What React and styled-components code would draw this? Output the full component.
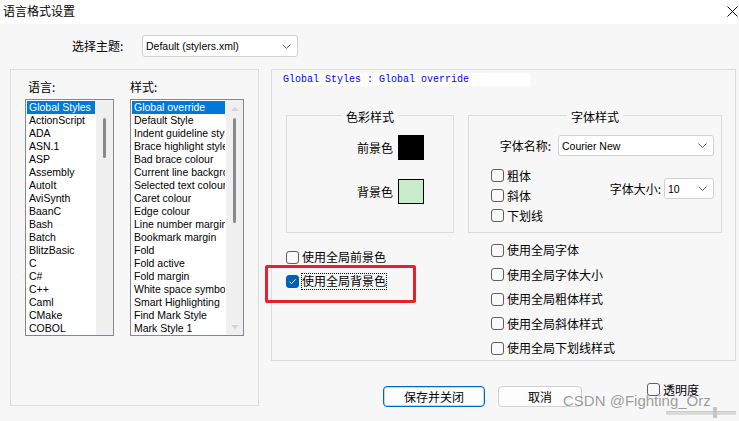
import React from 'react';
import styled, { createGlobalStyle } from 'styled-components';

const CJK = `"Noto Sans CJK SC", "Liberation Sans", sans-serif`;
const LATIN = `"Liberation Sans", "Noto Sans CJK SC", sans-serif`;

const GlobalStyle = createGlobalStyle`
  html, body {
    margin: 0;
    padding: 0;
    background: #f7f7f7;
  }
`;

const Window = styled.div`
  position: relative;
  width: 739px;
  height: 421px;
  overflow: hidden;
  background: #f7f7f7;
  font-family: ${CJK};
  font-size: 12px;
  line-height: 14px;
  color: #000;
  display: flex;
  flex-direction: column;
`;

const TitleBar = styled.div`
  height: 24px;
  flex: none;
  box-sizing: border-box;
  background: #fff;
  display: flex;
  align-items: center;
  justify-content: space-between;
  padding: 0 1px 2px 3px;
`;

const ThemeRow = styled.div`
  display: flex;
  align-items: center;
  height: 22px;
  margin-top: 11px;
  padding-left: 72px;
`;

const Label = styled.span`
  flex: none;
  width: ${p => (p.$w ? `${p.$w}px` : 'auto')};
  white-space: nowrap;
`;

const Combo = styled.div`
  box-sizing: border-box;
  flex: none;
  width: ${p => p.$w}px;
  height: ${p => p.$h}px;
  background: #fff;
  border: 1px solid #d2d2d2;
  border-radius: 3px;
  display: flex;
  align-items: center;
  justify-content: space-between;
  padding: 0 6px 0 3px;
  font-family: ${LATIN};
  font-size: 10.5px;
  svg {
    flex: none;
  }
`;

const Main = styled.div`
  display: flex;
  align-items: flex-start;
  gap: 12px;
  margin-top: 12px;
  padding-left: 10px;
`;

const LeftGroup = styled.div`
  box-sizing: border-box;
  width: 249px;
  height: 337px;
  border: 1px solid #dcdcdc;
  padding: 10px 0 0 14px;
  display: flex;
  gap: 16px;
`;

const ListColumn = styled.div`
  display: flex;
  flex-direction: column;
  gap: 6px;
  width: ${p => p.$w}px;
`;

const ListLabel = styled.div`
  line-height: 13px;
  padding-left: ${p => p.$indent || 0}px;
`;

const ListBox = styled.div`
  box-sizing: border-box;
  height: 237px;
  border: 1px solid #828790;
  background: #fff;
  display: flex;
`;

const Items = styled.div`
  flex: 1;
  min-width: 0;
  padding: 1px;
  overflow: hidden;
`;

const Item = styled.div`
  height: 13px;
  line-height: 13px;
  padding-left: 2px;
  font-family: ${LATIN};
  font-size: 10.5px;
  white-space: nowrap;
  overflow: hidden;
  background: ${p => (p.$sel ? '#0078d7' : 'transparent')};
  color: ${p => (p.$sel ? '#fff' : '#000')};
`;

const ScrollTrack = styled.div`
  flex: none;
  width: 17px;
  background: #f0f0f0;
  display: flex;
  flex-direction: column;
  align-items: center;
`;

const Arrow = styled.div`
  flex: none;
  height: 17px;
  display: flex;
  align-items: center;
  justify-content: center;
  &::before {
    content: '';
    border-left: 4px solid transparent;
    border-right: 4px solid transparent;
    ${p => (p.$down ? 'border-top' : 'border-bottom')}: 4px solid
      ${p => (p.$show ? '#d4d4d4' : 'transparent')};
  }
`;

const Thumb = styled.div`
  flex: none;
  width: 3px;
  height: ${p => p.$h}px;
  margin-top: 1px;
  border-radius: 2px;
  background: #8a8a8a;
`;

const Spacer = styled.div`
  flex: 1;
`;

const RightColumn = styled.div`
  width: 465px;
  display: flex;
  flex-direction: column;
`;

const Panel = styled.div`
  box-sizing: border-box;
  height: 292px;
  border: 1px solid #dcdcdc;
  padding-top: 3px;
  display: flex;
  flex-direction: column;
`;

const Preview = styled.div`
  width: 247px;
  height: 13px;
  margin-left: 10px;
  padding-left: 1px;
  background: #fff;
  color: #0000ff;
  font-family: "Liberation Mono", monospace;
  font-size: 10px;
  line-height: 13px;
  white-space: nowrap;
`;

const GroupsRow = styled.div`
  display: flex;
  gap: 14px;
  margin-top: 20px;
  padding-left: 14px;
`;

const GroupBox = styled.fieldset`
  box-sizing: border-box;
  width: ${p => p.$w}px;
  height: 127px;
  margin: 0;
  padding: 0;
  min-width: 0;
  border: 1px solid #dcdcdc;
`;

const Legend = styled.legend`
  margin: 0 auto;
  padding: 4px 4px 0;
  line-height: 14px;
`;

const ColorBody = styled.div`
  display: flex;
  flex-direction: column;
  gap: 19px;
  padding: 11px 0 0 70px;
`;

const ColorRow = styled.div`
  display: flex;
  align-items: center;
  gap: 5px;
  height: 25px;
`;

const Swatch = styled.div`
  box-sizing: border-box;
  width: 26px;
  height: 25px;
  border: 1px solid #000;
  background: ${p => p.$color};
`;

const FontBody = styled.div`
  display: flex;
  flex-direction: column;
  padding: 11px 7px 0 0;
`;

const FieldRow = styled.div`
  display: flex;
  align-items: center;
  justify-content: flex-end;
  gap: ${p => p.$gap || 0}px;
`;

const FontLower = styled.div`
  display: flex;
  align-items: flex-start;
  margin-top: 13px;
  padding-left: 22px;
`;

const CheckStack = styled.div`
  display: flex;
  flex-direction: column;
  gap: ${p => p.$gap || 0}px;
  padding-top: ${p => p.$top || 0}px;
  padding-left: ${p => p.$left || 0}px;
`;

const SizeRow = styled(FieldRow)`
  margin-left: auto;
  margin-top: 9px;
`;

const LowerRow = styled.div`
  display: grid;
  grid-template-columns: 181px 1fr;
  padding-left: 14px;
`;

const CheckRow = styled.div`
  display: flex;
  align-items: center;
  gap: 3px;
  height: ${p => p.$h || 13}px;
  white-space: nowrap;
`;

const Box = styled.span`
  box-sizing: border-box;
  flex: none;
  width: 13px;
  height: 13px;
  border-radius: 3px;
  border: 1px solid ${p => (p.$on ? '#005fb8' : '#5f5f5f')};
  background: ${p => (p.$on ? '#005fb8' : '#f9f9f9')};
  display: flex;
  align-items: center;
  justify-content: center;
`;

const CheckText = styled.span`
  line-height: 14px;
  ${p => p.$focus && `
    margin-left: -1px;
    border: 1px dotted #000;
    padding: 0 0 1px 0;
  `}
`;

const BottomRow = styled.div`
  display: flex;
  align-items: flex-start;
  margin-top: 22px;
  padding-left: 112px;
`;

const Button = styled.div`
  box-sizing: border-box;
  flex: none;
  width: ${p => p.$w}px;
  height: 21px;
  margin-top: 3px;
  margin-right: 13px;
  background: #fdfdfd;
  border: 1px solid ${p => (p.$primary ? '#0067c0' : '#d0d0d0')};
  box-shadow: ${p => (p.$primary ? 'inset 0 0 0 1px rgba(0, 103, 192, 0.25)' : 'none')};
  border-radius: 4px;
  display: flex;
  align-items: center;
  justify-content: center;
`;

const Opacity = styled.div`
  display: flex;
  flex-direction: column;
  margin-left: 52px;
`;

const Slider = styled.div`
  display: flex;
  align-items: center;
  width: 70px;
  height: 11px;
  margin: 11px 0 0 19px;
`;

const Track = styled.div`
  height: 3px;
  flex: ${p => (p.$w ? `0 0 ${p.$w}px` : 1)};
  background: #dadada;
  border-top: 1px solid #c9c9c9;
`;

const SliderThumb = styled.div`
  flex: none;
  width: 4px;
  height: 11px;
  background: #c6c6c6;
`;

const Watermark = styled.div`
  position: absolute;
  left: 563px;
  top: 392px;
  font-family: ${LATIN};
  font-size: 15px;
  line-height: 17px;
  color: rgba(120, 120, 120, 0.72);
  white-space: nowrap;
  pointer-events: none;
`;

const Highlight = styled.div`
  position: absolute;
  left: 265px;
  top: 265px;
  width: 151px;
  height: 38px;
  box-sizing: border-box;
  border: 3px solid #e8202a;
  border-radius: 2px;
  pointer-events: none;
`;

const Chevron = () => (
  <svg width="9" height="5" viewBox="0 0 9 5">
    <path d="M0.5 0.5 L4.5 4.5 L8.5 0.5" fill="none" stroke="#606060" strokeWidth="1" />
  </svg>
);

const CloseIcon = () => (
  <svg width="11" height="11" viewBox="0 0 11 11">
    <path d="M0.5 0.5 L10.5 10.5 M10.5 0.5 L0.5 10.5" stroke="#000" strokeWidth="1" />
  </svg>
);

const Check = ({ on, focus, h, children }) => (
  <CheckRow $h={h}>
    <Box $on={on}>
      {on && (
        <svg width="9" height="9" viewBox="0 0 9 9">
          <path d="M1.5 4.8 L3.5 6.6 L7.5 2.4" fill="none" stroke="#fff" strokeWidth="1" />
        </svg>
      )}
    </Box>
    <CheckText $focus={focus}>{children}</CheckText>
  </CheckRow>
);

const languages = [
  'Global Styles', 'ActionScript', 'ADA', 'ASN.1', 'ASP', 'Assembly', 'AutoIt',
  'AviSynth', 'BaanC', 'Bash', 'Batch', 'BlitzBasic', 'C', 'C#', 'C++', 'Caml',
  'CMake', 'COBOL',
];

const styles = [
  'Global override', 'Default Style', 'Indent guideline style', 'Brace highlight style',
  'Bad brace colour', 'Current line background colour', 'Selected text colour',
  'Caret colour', 'Edge colour', 'Line number margin', 'Bookmark margin', 'Fold',
  'Fold active', 'Fold margin', 'White space symbol', 'Smart Highlighting',
  'Find Mark Style', 'Mark Style 1',
];

const globalChecks = [
  '使用全局字体', '使用全局字体大小', '使用全局粗体样式', '使用全局斜体样式', '使用全局下划线样式',
];

function List({ label, indent, width, items, thumb, arrows }) {
  return (
    <ListColumn $w={width}>
      <ListLabel $indent={indent}>{label}</ListLabel>
      <ListBox>
        <Items>
          {items.map((name, i) => (
            <Item key={name} $sel={i === 0}>{name}</Item>
          ))}
        </Items>
        <ScrollTrack>
          <Arrow $show={arrows} />
          <Thumb $h={thumb} />
          <Spacer />
          <Arrow $show={arrows} $down />
        </ScrollTrack>
      </ListBox>
    </ListColumn>
  );
}

export default function App() {
  return (
    <Window>
      <GlobalStyle />
      <TitleBar>
        <span>语言格式设置</span>
        <CloseIcon />
      </TitleBar>

      <ThemeRow>
        <Label $w={70}>选择主题:</Label>
        <Combo $w={156} $h={22}>
          <span>Default (stylers.xml)</span>
          <Chevron />
        </Combo>
      </ThemeRow>

      <Main>
        <LeftGroup>
          <List label="语言:" indent={3} width={89} items={languages} thumb={40} />
          <List label="样式:" width={114} items={styles} thumb={105} arrows />
        </LeftGroup>

        <RightColumn>
          <Panel>
            <Preview>Global Styles : Global override</Preview>

            <GroupsRow>
              <GroupBox $w={168}>
                <Legend>色彩样式</Legend>
                <ColorBody>
                  <ColorRow>
                    <Label>前景色</Label>
                    <Swatch $color="#000" />
                  </ColorRow>
                  <ColorRow>
                    <Label>背景色</Label>
                    <Swatch $color="#c8ecca" />
                  </ColorRow>
                </ColorBody>
              </GroupBox>

              <GroupBox $w={254}>
                <Legend>字体样式</Legend>
                <FontBody>
                  <FieldRow $gap={7}>
                    <Label>字体名称:</Label>
                    <Combo $w={156} $h={21}>
                      <span>Courier New</span>
                      <Chevron />
                    </Combo>
                  </FieldRow>
                  <FontLower>
                    <CheckStack $gap={7}>
                      <Check>粗体</Check>
                      <Check>斜体</Check>
                      <Check>下划线</Check>
                    </CheckStack>
                    <SizeRow $gap={3}>
                      <Label>字体大小:</Label>
                      <Combo $w={50} $h={21}>
                        <span>10</span>
                        <Chevron />
                      </Combo>
                    </SizeRow>
                  </FontLower>
                </FontBody>
              </GroupBox>
            </GroupsRow>

            <LowerRow>
              <CheckStack $top={12}>
                <Check h={24}>使用全局前景色</Check>
                <Check h={24} on focus>使用全局背景色</Check>
              </CheckStack>
              <CheckStack $top={5} $left={24}>
                {globalChecks.map(text => (
                  <Check key={text} h={24.5}>{text}</Check>
                ))}
              </CheckStack>
            </LowerRow>
          </Panel>

          <BottomRow>
            <Button $w={102} $primary>保存并关闭</Button>
            <Button $w={84}>取消</Button>
            <Opacity>
              <Check>透明度</Check>
              <Slider>
                <Track $w={47} />
                <SliderThumb />
                <Track />
              </Slider>
            </Opacity>
          </BottomRow>
        </RightColumn>
      </Main>

      <Highlight />
      <Watermark>CSDN @Fighting_Orz</Watermark>
    </Window>
  );
}
